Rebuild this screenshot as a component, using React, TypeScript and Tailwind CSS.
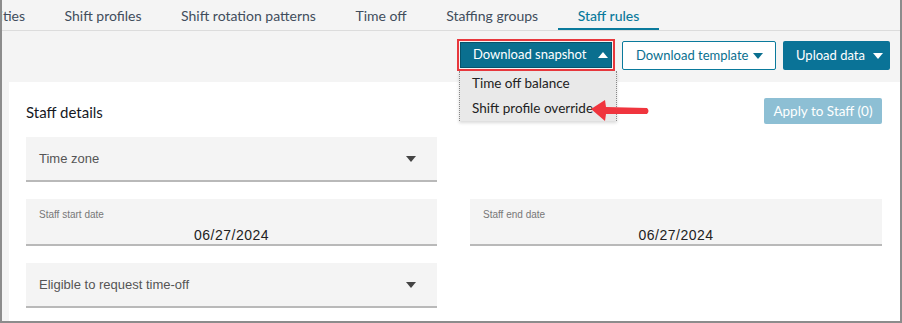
import { ReactNode } from 'react';

const tabs = ['Activities', 'Shift profiles', 'Shift rotation patterns', 'Time off', 'Staffing groups', 'Staff rules'];

function Caret({ up = false, className = '' }: { up?: boolean; className?: string }) {
  return (
    <svg width="10" height="6" viewBox="0 0 10 6" className={`shrink-0 ${className}`}>
      {up ? <path d="M0 6 L5 0 L10 6 Z" fill="currentColor" /> : <path d="M0 0 L10 0 L5 6 Z" fill="currentColor" />}
    </svg>
  );
}

function Field({ children, className = '' }: { children: ReactNode; className?: string }) {
  return (
    <div className={`bg-[#f4f4f4] border-b-2 border-[#b9b9b9] px-[13px] ${className}`}>{children}</div>
  );
}

function SelectField({ label }: { label: string }) {
  return (
    <Field className="h-[45px] flex items-center justify-between">
      <span className="text-[13px] text-[#555]">{label}</span>
      <Caret className="text-[#444] mr-[8px]" />
    </Field>
  );
}

function DateField({ label, value }: { label: string; value: string }) {
  return (
    <Field className="h-[47px] pt-[10px]">
      <div className="text-[10px] leading-[12px] text-[#777]">{label}</div>
      <div className="text-center text-[14px] leading-[18px] mt-[5px] text-[#222] tracking-[0.5px]">{value}</div>
    </Field>
  );
}

export default function App() {
  return (
    <div className="w-[902px] h-[323px] overflow-hidden bg-[#f4f4f4] border-l-2 border-r-2 border-b-2 border-[#8c8c8c] font-['Liberation_Sans',Arial,sans-serif] relative">
      {/* tabs */}
      <div className="h-[31px] border-b border-[#dcdcdc] overflow-hidden">
        <div className="flex ml-[-54px] font-['Lato',sans-serif] text-[14px] text-[#414d5c]">
          {tabs.map(t => (
            <div
              key={t}
              className={`px-[19.75px] h-[31px] flex items-center whitespace-nowrap ${
                t === 'Staff rules' ? 'text-[#0a7a9c] border-b-[3px] border-[#0a7a9c] pt-[2px] font-medium' : ''
              }`}
            >
              {t}
            </div>
          ))}
        </div>
      </div>

      {/* toolbar */}
      <div className="h-[51px] flex justify-end items-start pt-[8px] pr-[10px] gap-[7px] font-['Lato',sans-serif] text-[13px] whitespace-nowrap">
        <div className="relative">
          <div className="border-2 border-[#e8383d] p-[1px]">
            <button className="h-[26px] w-[152px] bg-[#0a6f8f] border border-[#06536b] text-white flex items-center pl-[12px] gap-[12px] whitespace-nowrap">
              Download snapshot
              <Caret up className="text-white" />
            </button>
          </div>
          <div className="absolute left-[2px] top-[32px] w-[158px] h-[50px] bg-[#e9e9e9] border-l border-r border-dotted border-[#888] shadow-[0_2px_3px_rgba(0,0,0,0.15)] text-[#222] text-[13.5px] pl-[12px] z-10">
            <div className="h-[25px] flex items-center">Time off balance</div>
            <div className="h-[25px] flex items-center">Shift profile override</div>
          </div>
          <svg width="62" height="24" viewBox="0 0 62 24" className="absolute left-[132px] top-[60px] z-20">
            <path d="M2 10 L16 1 L17 8 L58 9 Q61 12 58 15 L17 15 L16 22 Z" fill="#f0353e" />
          </svg>
        </div>
        <button className="h-[29px] w-[154px] bg-white border border-[#0a7a9c] rounded-[2px] text-[#0a6f8f] flex items-center justify-between pl-[13px] pr-[12px] mt-[2px] whitespace-nowrap">
          Download template
          <Caret className="text-[#0a6f8f]" />
        </button>
        <button className="h-[29px] w-[107px] bg-[#0a7397] rounded-[2px] text-white flex items-center justify-between pl-[13px] pr-[7px] mt-[2px] whitespace-nowrap">
          Upload data
          <Caret className="text-white" />
        </button>
      </div>

      {/* card */}
      <div className="ml-[7px] bg-white h-[240px] pl-[17px] pr-[18px] pt-[16px]">
        <div className="flex justify-between items-center h-[26px]">
          <h2 className="font-['Lato',sans-serif] text-[15px] text-[#16191f] pt-[2px]">Staff details</h2>
          <button className="h-[26px] w-[118px] bg-[#8dbfd4] rounded-[2px] text-white font-['Lato',sans-serif] text-[13.5px] whitespace-nowrap">
            Apply to Staff (0)
          </button>
        </div>
        <div className="grid grid-cols-[411px_412px] gap-x-[33px] gap-y-[17px] mt-[13px]">
          <SelectField label="Time zone" />
          <div />
          <DateField label="Staff start date" value="06/27/2024" />
          <DateField label="Staff end date" value="06/27/2024" />
          <SelectField label="Eligible to request time-off" />
        </div>
      </div>
    </div>
  );
}
